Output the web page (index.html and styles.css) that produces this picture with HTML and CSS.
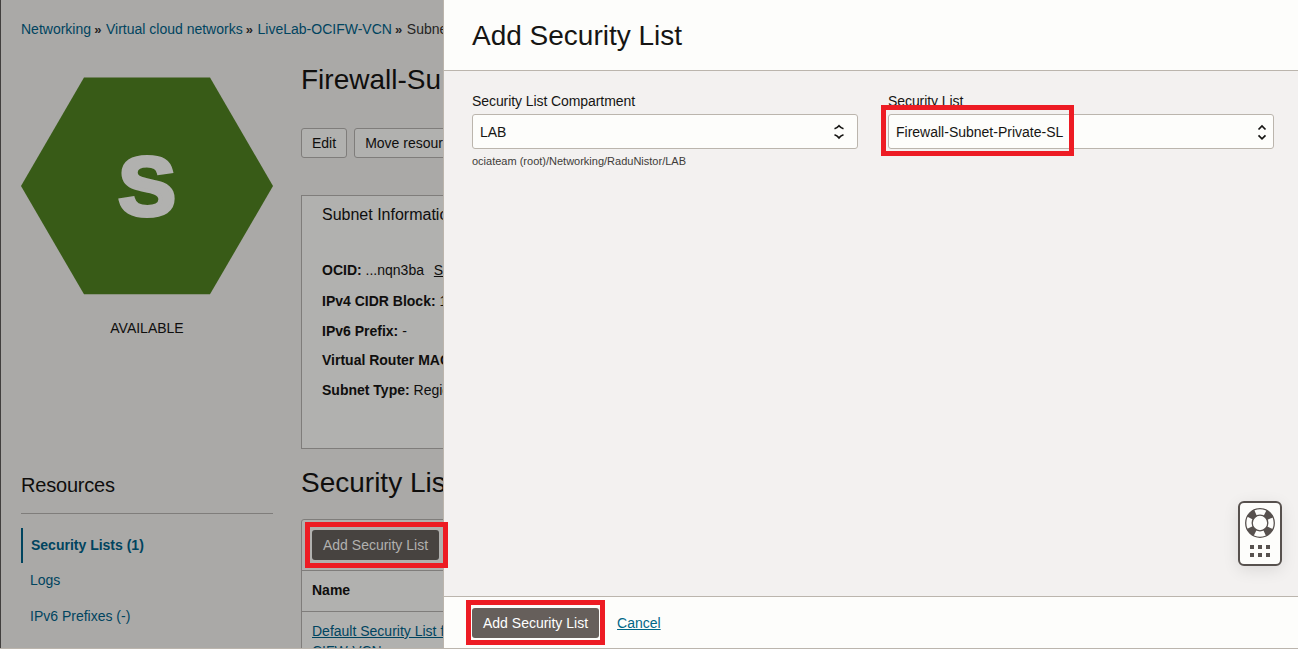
FILE: index.html
```html
<!DOCTYPE html>
<html lang="en">
<head>
<meta charset="utf-8">
<title>Add Security List</title>
<link rel="stylesheet" href="styles.css">
</head>
<body>
<div class="app">
  <div class="page">
    <nav class="crumbs"><a>Networking</a><i>»</i><a>Virtual cloud networks</a><i>»</i><a>LiveLab-OCIFW-VCN</a><i>»</i><span>Subne</span></nav>
    <div class="columns">
      <aside class="side">
        <svg class="hexagon" viewBox="0 0 252 218" width="252" height="218">
          <path d="M0 109 63 .6H189L252 109 189 217.3H63Z" fill="#385b17"/>
          <text class="hexagon-letter" x="0" y="0" text-anchor="middle" transform="translate(126 138) scale(1.03 1)">S</text>
        </svg>
        <div class="status">AVAILABLE</div>
        <h3 class="side-title">Resources</h3>
        <ul class="side-list">
          <li class="active">Security Lists (1)</li>
          <li>Logs</li>
          <li>IPv6 Prefixes (-)</li>
        </ul>
      </aside>
      <main class="main">
        <h1 class="heading">Firewall-Su</h1>
        <div class="actions"><button class="outline">Edit</button><button class="outline">Move resource</button></div>
        <section class="info">
          <h4 class="info-title">Subnet Information</h4>
          <div class="row first"><b>OCID:</b> ...nqn3ba <a class="show">Show</a></div>
          <div class="row"><b>IPv4 CIDR Block:</b> 1</div>
          <div class="row third"><b>IPv6 Prefix:</b> -</div>
          <div class="row"><b>Virtual Router MAC</b></div>
          <div class="row"><b>Subnet Type:</b> Regional</div>
        </section>
        <h2 class="heading list-heading">Security Lists</h2>
        <section class="table">
          <div class="toolbar"><button class="solid dim">Add Security List</button></div>
          <div class="thead">Name</div>
          <div class="cell"><a>Default Security List f<br>CIFW-VCN</a></div>
        </section>
      </main>
    </div>
  </div>
  <div class="drawer">
    <header class="drawer-head">Add Security List</header>
    <div class="drawer-body">
      <div class="field">
        <label class="label">Security List Compartment</label>
        <div class="select">LAB
          <svg class="arrows wide" width="12" height="16" viewBox="0 0 12 16"><path d="M1.5 4.8Q4 4 6 1.7 8 4 10.5 4.8M1.5 10.8Q4 11.6 6 13.9 8 11.6 10.5 10.8"/></svg>
        </div>
        <div class="hint">ociateam (root)/Networking/RaduNistor/LAB</div>
      </div>
      <div class="field">
        <label class="label">Security List</label>
        <div class="select">Firewall-Subnet-Private-SL
          <svg class="arrows" width="10" height="16" viewBox="0 0 10 16"><path d="M1.5 5.5 5 2l3.5 3.5M1.5 11.3 5 14.8l3.5-3.5"/></svg>
        </div>
      </div>
    </div>
    <footer class="drawer-foot"><button class="solid">Add Security List</button><a class="cancel">Cancel</a></footer>
  </div>
  <div class="help">
    <svg width="40" height="61" viewBox="0 0 40 61">
      <g fill="none" stroke="#57514e">
        <circle cx="20" cy="20" r="11" stroke-width="7" stroke-dasharray="7.5 9.78" stroke-dashoffset="-4.89"/>
        <circle cx="20" cy="20" r="14.3" stroke-width="1.3"/>
        <circle cx="20" cy="20" r="7.8" stroke-width="1.3"/>
      </g>
      <path fill="#57514e" d="M10 42h4v4h-4zM18 42h4v4h-4zM26 42h4v4h-4zM10 50h4v4h-4zM18 50h4v4h-4zM26 50h4v4h-4z"/>
    </svg>
  </div>
  <div class="mark mark-list"></div>
  <div class="mark mark-select"></div>
  <div class="mark mark-submit"></div>
</div>
</body>
</html>
```
FILE: styles.css
```css
* { box-sizing: border-box; }
body { margin: 0; font: 14px/18px "Liberation Sans", Arial, sans-serif; color: #161513; }
h1, h2, h3, h4, ul { margin: 0; padding: 0; font-weight: 400; list-style: none; }
button { font: inherit; white-space: nowrap; margin: 0; }
.app { position: relative; display: flex; width: 1298px; height: 649px; overflow: hidden; border-bottom: 1px solid #bbb5ad; }

/* Dimmed page behind the drawer */
.page { flex: 0 0 443px; overflow: hidden; background: #aaa9a7; border-left: 1px solid #413f3e; padding: 20px 0 0 20px; color: #0f0e0d; white-space: nowrap; }
.page a, .side-list { color: #00445f; }
.crumbs { height: 18px; color: #252423; }
.crumbs i { font-style: normal; font-weight: 700; font-size: 13px; margin: 0 4.5px 0 3.2px; }
.columns { display: flex; gap: 28px; }
.side { flex: 0 0 252px; padding-top: 39px; }
.hexagon { display: block; }
.hexagon-letter { font: 700 84px "Liberation Sans", Arial, sans-serif; fill: #b1b1af; stroke: #b1b1af; stroke-width: 4px; }
.status { text-align: center; margin-top: 24px; }
.side-title { font-size: 20px; line-height: 24px; letter-spacing: -.2px; margin-top: 136px; padding-bottom: 16px; border-bottom: 1px solid #7f7d7b; }
.side-list { padding-top: 14px; }
.side-list li { height: 36px; line-height: 34px; padding-left: 9px; }
.side-list .active { height: 35px; line-height: 35px; border-left: 2px solid #00445f; padding-left: 8px; font-weight: 700; }
.main { flex: 0 0 600px; padding-top: 25px; }
.heading { font-size: 28px; line-height: 34px; }
.actions { display: flex; gap: 7px; margin-top: 31px; }
.outline { height: 30px; padding: 0 10px; background: #b1b1af; border: 1px solid #7f7d7b; border-radius: 3px; color: #0f0e0d; }
.info { height: 254px; margin-top: 37px; padding: 9px 20px; background: #b1b1af; border: 1px solid #7f7d7b; }
.info-title { font-size: 16px; line-height: 20px; margin-bottom: 36px; }
.row { height: 30px; }
.first { height: 31px; }
.third { height: 29px; }
.page .show { color: #0f0e0d; text-decoration: underline; margin-left: 6px; }
.list-heading { margin-top: 17px; }
.table { height: 160px; margin-top: 19px; background: #b1b1af; border: 1px solid #7f7d7b; border-radius: 3px; }
.toolbar { padding: 10px; height: 51px; border-bottom: 1px solid #7f7d7b; }
.solid { height: 30px; padding: 0 11px; border: 0; border-radius: 3px; background: #665f5b; color: #fff; }
.dim { background: #474340; color: #b1b1af; }
.thead { height: 41px; line-height: 39px; padding-left: 10px; border-bottom: 1px solid #7f7d7b; font-weight: 700; }
.cell { padding: 9px 10px; line-height: 20px; }
.cell a { text-decoration: underline; }

/* Drawer */
.drawer { flex: 1; display: flex; flex-direction: column; background: #fdfdfb; border-left: 1px solid #bbb5ad; }
.drawer-head { height: 71px; line-height: 71px; padding-left: 28px; font-size: 28px; border-bottom: 1px solid #bbb5ad; }
.drawer-body { flex: 1; display: flex; gap: 30px; padding: 21px 24px 0 28px; background: #f3f1f0; }
.field { flex: 0 0 386px; }
.label { display: block; letter-spacing: -.08px; }
.select { display: flex; align-items: center; justify-content: space-between; height: 35px; margin-top: 4px; padding: 0 6px 0 7px; background: #fdfdfb; border: 1px solid #bbb5ad; border-radius: 3px; }
.arrows { fill: none; stroke: #161513; stroke-width: 1.7; }
.wide { margin-right: 6px; }
.hint { font-size: 11px; line-height: 14px; margin-top: 5px; color: #403c39; }
.drawer-foot { height: 52px; display: flex; align-items: center; gap: 18px; padding-left: 28px; border-top: 1px solid #bbb5ad; }
.cancel { color: #006687; text-decoration: underline; }

/* Floating help launcher and highlight frames */
.help { position: absolute; left: 1238px; top: 501px; width: 44px; height: 65px; border: 2px solid #57514e; border-radius: 6px; background: #fdfdfb; box-shadow: 0 4px 16px rgba(0, 0, 0, .1); }
.help svg { display: block; }
.mark { position: absolute; border: 5px solid #ed1c24; }
.mark-list { left: 305px; top: 522px; width: 143px; height: 46px; }
.mark-select { left: 881px; top: 105px; width: 193px; height: 51px; }
.mark-submit { left: 466px; top: 600px; width: 139px; height: 45px; }
```
